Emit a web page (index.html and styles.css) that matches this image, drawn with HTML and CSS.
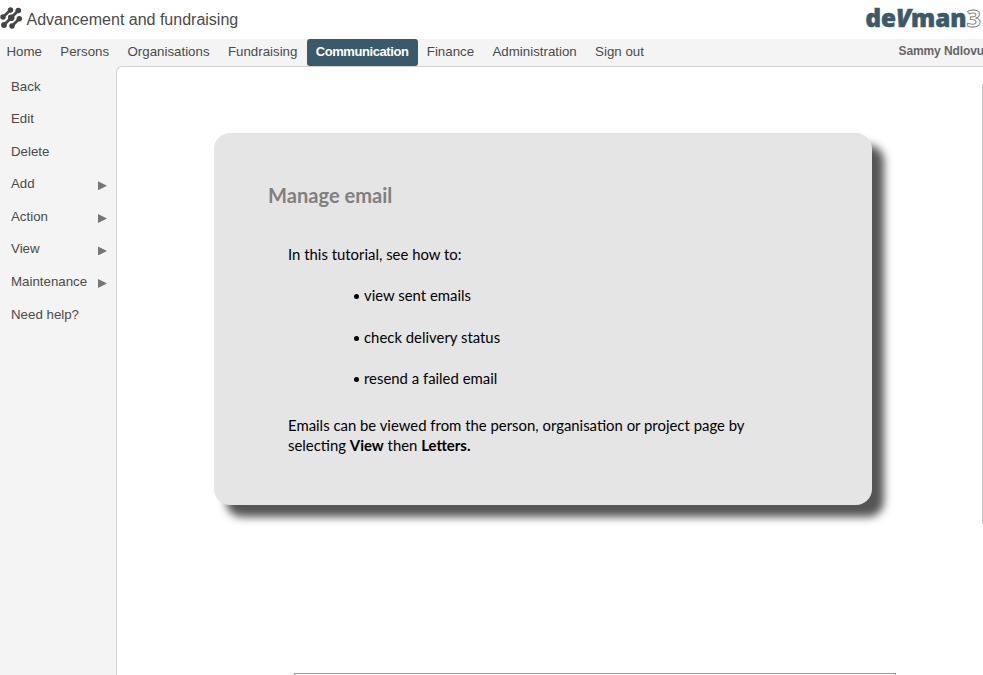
FILE: index.html
```html
<!DOCTYPE html>
<html lang="en">
<head>
<meta charset="utf-8">
<title>Advancement and fundraising</title>
<link rel="stylesheet" href="styles.css">
</head>
<body>
<header class="top">
  <svg class="mark" width="23" height="22" viewBox="0 0 23 22">
    <g stroke="#484848" stroke-width="2.8" fill="none"><path d="M3 10 10.500 3M4 18 18.300 3.500M12 19 19.500 11.500"/></g>
    <g fill="#444"><circle cx="10.500" cy="3" r="2.700"/><circle cx="18.300" cy="3.500" r="2.800"/><circle cx="3" cy="10" r="2.700"/><circle cx="11.200" cy="10.800" r="3.300"/><circle cx="19.300" cy="11.800" r="2.700"/><circle cx="4" cy="18" r="2.900"/><circle cx="12" cy="19" r="2.700"/></g>
  </svg>
  <h1 class="title">Advancement and fundraising</h1>
  <svg class="brand" width="118" height="39" viewBox="0 0 118 39">
    <text class="brand-text" x="0.500" y="27" textLength="101" lengthAdjust="spacingAndGlyphs">de<tspan class="brand-v">V</tspan>man</text>
    <text class="brand-three" x="101.500" y="27" textLength="14.500" lengthAdjust="spacingAndGlyphs">3</text>
  </svg>
</header>
<nav class="nav">
  <a>Home</a><a>Persons</a><a>Organisations</a><a>Fundraising</a><a class="active">Communication</a><a>Finance</a><a>Administration</a><a>Sign out</a>
  <span class="user">Sammy Ndlovu</span>
</nav>
<div class="body">
  <aside class="side">
    <a>Back</a><a>Edit</a><a>Delete</a>
    <a class="more">Add</a><a class="more">Action</a><a class="more">View</a><a class="more">Maintenance</a>
    <a>Need help?</a>
  </aside>
  <main class="main">
    <section class="card">
      <h2>Manage email</h2>
      <p class="intro">In this tutorial, see how to:</p>
      <ul>
        <li>view sent emails</li>
        <li>check delivery status</li>
        <li>resend a failed email</li>
      </ul>
      <p class="note">Emails can be viewed from the person, organisation or project page by<br>selecting <b>View</b> then <b>Letters.</b></p>
    </section>
    <div class="frame"></div>
    <i class="scroll"></i>
  </main>
</div>
</body>
</html>
```
FILE: styles.css
```css
* { box-sizing: border-box; }
body {
  margin: 0;
  height: 675px;
  overflow: hidden;
  display: flex;
  flex-direction: column;
  background: #fff;
  color: #4a4a4a;
  font-family: "Liberation Sans", Arial, sans-serif;
  font-size: 13.3px;
}
.top { flex: none; height: 39px; display: flex; align-items: flex-start; }
.mark { flex: none; margin-top: 7px; }
.title { margin: 10px 0 0 3.500px; font-size: 16px; line-height: 20px; font-weight: 400; white-space: nowrap; }
.brand { margin-left: auto; flex: none; }
.brand-text { font: 800 25px "Open Sans", sans-serif; fill: #3a5a6a; stroke: #3a5a6a; stroke-width: .6px; }
.brand-v { font-style: italic; }
.brand-three { font: 700 24px "Open Sans", sans-serif; fill: #fff; stroke: #777; stroke-width: .8px; }
.nav {
  flex: none;
  height: 27px;
  display: flex;
  background: #f4f4f4;
  line-height: 25px;
  white-space: nowrap;
}
.nav a { padding: 0 9.200px; }
.nav a:first-child { padding-left: 6.500px; }
.nav a.active { padding: 0; width: 111px; text-align: center; background: #3a5a6b; color: #fff; font-size: 13px; font-weight: 700; border-radius: 3px; letter-spacing: -.42px; }
.user { margin-left: auto; margin-right: -1px; font-size: 12px; line-height: 24px; font-weight: 700; color: #666; letter-spacing: -.1px; }
.body { flex: 1; display: flex; background: #f4f4f4; min-height: 0; }
.side { flex: none; width: 116px; padding: 3.500px 9px 0 11px; }
.side a { display: flex; justify-content: space-between; height: 32.6px; line-height: 33px; }
.more::after {
  content: "";
  width: 9px;
  height: 9px;
  margin-top: 14px;
  background: #77757a;
  clip-path: polygon(0 0, 100% 50%, 0 100%);
}
.main {
  flex: 1;
  position: relative;
  display: flex;
  flex-direction: column;
  padding: 66px 0 0 97px;
  background: #fff;
  border: solid #d2d2d2;
  border-width: 1px 0 0 1px;
  border-top-left-radius: 6px;
}
.card {
  flex: none;
  width: 658px;
  height: 372px;
  padding: 50px 54px 0;
  background: #e5e5e5;
  border-radius: 16px;
  box-shadow: 12px 12px 8px 0 #555;
  font-family: Lato, sans-serif;
  font-size: 14.9px;
  line-height: 20px;
  color: #000;
}
.card h2 { margin: 0; font-size: 20.1px; line-height: 24px; color: #808080; }
.card p { margin: 0 0 0 20px; white-space: nowrap; }
.card .intro { margin-top: 37px; }
.card ul { margin: 21px 0 0 86px; padding: 0; list-style: none; }
.card li { display: flex; align-items: center; height: 20px; margin-bottom: 21.500px; }
.card li::before { content: ""; width: 5px; height: 5px; margin: 3px 5px 0 0; border-radius: 50%; background: #000; }
.card .note { margin-top: 27px; }
.frame { width: 602px; height: 2px; margin: 168px 0 0 80px; border: solid #999; border-width: 1px 1px 0; flex: none; }
.scroll { position: absolute; right: 0; top: 17px; width: 1px; height: 440px; background: #ccc; }
```
